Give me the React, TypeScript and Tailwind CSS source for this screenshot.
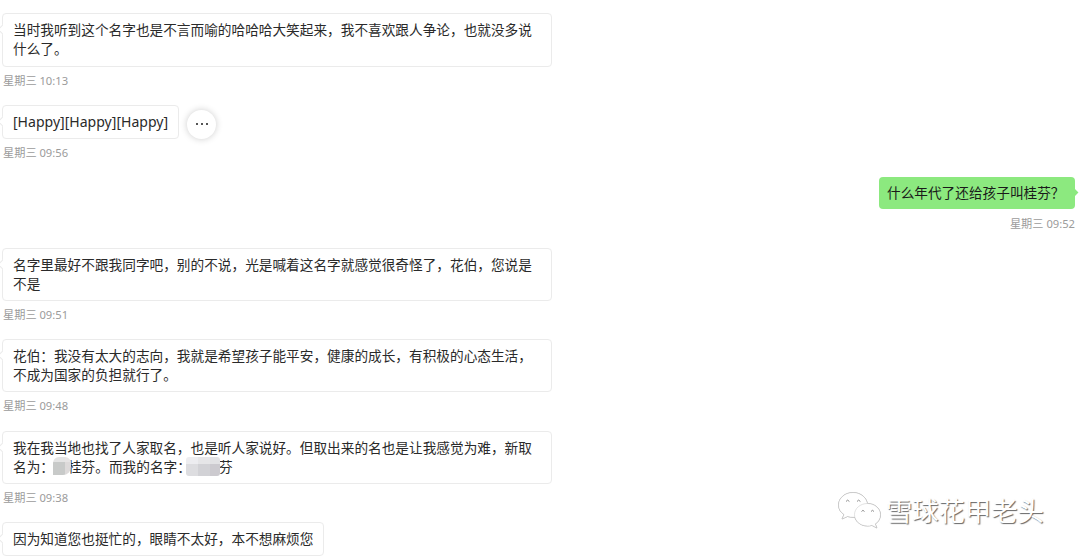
import type { ReactNode } from "react";

const FONT = "font-['Noto_Sans','Noto_Sans_CJK_SC',sans-serif]";

function Tail({ className }: { className: string }) {
  return (
    <span
      className={`absolute top-[12px] h-[7px] w-[7px] rotate-45 ${className}`}
    />
  );
}

type IncomingProps = {
  time?: string;
  row: string;
  bubble: string;
  children: ReactNode;
  action?: ReactNode;
};

function Incoming({ time, row, bubble, children, action }: IncomingProps) {
  return (
    <article className={`flex shrink-0 flex-col items-start pl-[2px] ${row}`}>
      <div className="flex items-center gap-2">
        <div
          className={`relative rounded border border-[#ebebeb] bg-white pt-[6px] pl-[10px] leading-[19px] whitespace-nowrap text-[#2a2a2a] ${bubble}`}
        >
          <Tail className="-left-[4.5px] border-b border-l border-[#ebebeb] bg-white" />
          {children}
        </div>
        {action}
      </div>
      {time && <Time value={time} />}
    </article>
  );
}

function Time({ value }: { value: string }) {
  return (
    <time className="mt-[6px] px-px text-[11.2px] leading-4 whitespace-nowrap text-[#9b9b9b]">
      {value}
    </time>
  );
}

function Masked({ className, cells }: { className: string; cells: string[] }) {
  return (
    <span className={`relative inline-grid overflow-hidden align-top ${className}`}>
      {cells.map((cell, i) => (
        <i key={i} className={cell} />
      ))}
    </span>
  );
}

function Watermark() {
  return (
    <div className="absolute top-[491px] left-[837px] flex items-center">
      <svg
        width="46"
        height="40"
        viewBox="0 0 46 40"
        fill="none"
        className="drop-shadow-[0_0.5px_0.5px_rgba(0,0,0,0.45)]"
      >
        <g fill="#fff" stroke="#c4c4c4" strokeWidth="0.5">
          <path d="M16 1.500C8 1.500 1.500 7 1.500 14c0 4 2 7.300 5.500 9.500L5 28l5.500-2.500c1.800.5 3.500.8 5.500.8 8 0 14.500-5.500 14.500-12.300S24 1.500 16 1.500Z" />
          <path d="M30.500 12.500c-7.200 0-13 4.900-13 11.200s5.800 11.300 13 11.300c1.500 0 3-.2 4.400-.6l5 2.600-1.600-4.100c3.300-2 5.200-5.400 5.200-9.200 0-6.200-5.800-11.200-13-11.200Z" />
        </g>
        <path
          stroke="#808080"
          strokeWidth="0.9"
          d="M9 10.500q1.500-2.800 3.400 0M20 10.500q1.500-2.800 3.400 0M24.500 20.500q1.400-2.400 3 0M34 20.500q1.400-2.400 3 0"
        />
      </svg>
      <span className="ml-[3px] text-[26.3px] leading-[40px] whitespace-nowrap text-white [text-shadow:1px_1px_1px_#666]">
        雪球花甲老头
      </span>
    </div>
  );
}

export default function App() {
  return (
    <main
      className={`relative flex h-[559px] w-[1080px] flex-col overflow-hidden bg-white pt-[13px] text-[13.66px] ${FONT}`}
      lang="zh-CN"
    >
      <Incoming time="星期三 10:13" row="h-[92px]" bubble="h-[54px] w-[550px]">
        当时我听到这个名字也是不言而喻的哈哈哈大笑起来，我不喜欢跟人争论，也就没多说
        <br />
        什么了。
      </Incoming>

      <Incoming
        time="星期三 09:56"
        row="h-[72px]"
        bubble="h-[34px] w-[177px] text-[14.05px]"
        action={
          <button className="mt-[3px] -mb-[1px] flex h-[29px] w-[29px] items-center justify-center gap-[3px] rounded-full bg-white shadow-[0_0_7px_rgba(0,0,0,0.2)]">
            <i className="h-[2px] w-[2px] bg-[#555]" />
            <i className="h-[2px] w-[2px] bg-[#555]" />
            <i className="h-[2px] w-[2px] bg-[#555]" />
          </button>
        }
      >
        [Happy][Happy][Happy]
      </Incoming>

      <article className="flex h-[71px] shrink-0 flex-col items-end pr-[5px]">
        <div className="relative mb-px h-[32px] w-[196px] rounded bg-[#8ce97f] pt-[6px] pl-[8px] leading-[20px] whitespace-nowrap text-[#1a1a1a]">
          <Tail className="-right-[2px] bg-[#8ce97f]" />
          什么年代了还给孩子叫桂芬？
        </div>
        <div className="-mr-px flex">
          <Time value="星期三 09:52" />
        </div>
      </article>

      <Incoming time="星期三 09:51" row="h-[91px]" bubble="h-[53px] w-[550px]">
        名字里最好不跟我同字吧，别的不说，光是喊着这名字就感觉很奇怪了，花伯，您说是
        <br />
        不是
      </Incoming>

      <Incoming time="星期三 09:48" row="h-[92px]" bubble="h-[53px] w-[550px]">
        花伯：我没有太大的志向，我就是希望孩子能平安，健康的成长，有积极的心态生活，
        <br />
        不成为国家的负担就行了。
      </Incoming>

      <Incoming time="星期三 09:38" row="h-[91px]" bubble="h-[53px] w-[550px]">
        我在我当地也找了人家取名，也是听人家说好。但取出来的名也是让我感觉为难，新取
        <br />
        名为：
        <Masked
          className="z-10 -mr-[3px] -ml-px h-[18px] w-[18px] grid-cols-[12px_6px] grid-rows-[5px_13px] rounded-t-[6px] rounded-br-[8px]"
          cells={["bg-[#e4e4e4]", "bg-[#e6e4e4]", "bg-[#c8cac9]", "bg-[#dddada]"]}
        />
        桂芬。而我的名字：
        <Masked
          className="-mr-[1px] -ml-[5px] h-[19px] w-[34px] grid-cols-[12px_12px_10px] grid-rows-[7px_12px] rounded-[3px]"
          cells={[
            "bg-[#ededf0]",
            "bg-[#e6e6e8]",
            "bg-[#e2e2e4]",
            "bg-[#dddde0]",
            "bg-[#d2d2d6]",
            "bg-[#cccacf]",
          ]}
        />
        芬
      </Incoming>

      <Incoming row="h-[34px]" bubble="h-[34px] w-[322px]">
        因为知道您也挺忙的，眼睛不太好，本不想麻烦您
      </Incoming>

      <Watermark />
    </main>
  );
}
